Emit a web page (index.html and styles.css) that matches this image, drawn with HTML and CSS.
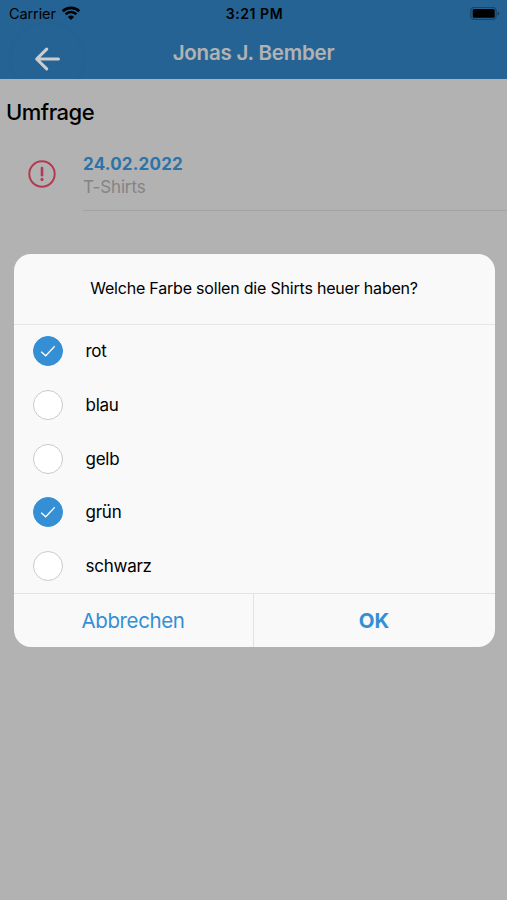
FILE: index.html
```html
<!DOCTYPE html>
<html lang="de">
<head>
  <meta charset="UTF-8">
  <meta name="viewport" content="width=device-width, initial-scale=1.0">
  <title>Umfrage</title>
  <link rel="stylesheet" href="styles.css">
</head>
<body>
  <header class="header">
    <div class="status-bar">
      <div class="carrier">
        <span>Carrier</span>
        <svg width="20" height="15" viewBox="0 0 20 15">
          <path d="M1.7 5.2a11.9 11.9 0 0 1 16.6 0M4.6 8.2a7.7 7.7 0 0 1 10.8 0" fill="none" stroke="#000" stroke-width="2.6"/>
          <path d="M10 14l-3.1-3.1a4.5 4.5 0 0 1 6.2 0z"/>
        </svg>
      </div>
      <div class="clock">3:21 PM</div>
      <svg class="battery" width="30" height="14" viewBox="0 0 30 14">
        <rect x=".8" y=".3" width="25.4" height="12" rx="3.6" fill="none" stroke="#000" stroke-opacity=".3" stroke-width="1.3"/>
        <rect x="2.7" y="1.9" width="22" height="8.8" rx="1.5"/>
        <path d="M27.7 4.5v4q1.5-.6 1.5-2t-1.5-2z" fill-opacity=".4"/>
      </svg>
    </div>
    <div class="toolbar">
      <button class="back-btn" aria-label="Zurück">
        <svg width="28" height="26" viewBox="0 0 28 26">
          <path d="M13.7 3.1L3.7 13l10 9.9M4.2 13h21.2" fill="none" stroke="#cdcdcd" stroke-width="3.1" stroke-linecap="round" stroke-linejoin="round"/>
        </svg>
      </button>
      <h1 class="title">Jonas J. Bember</h1>
    </div>
  </header>

  <main class="content">
    <h2 class="section-title">Umfrage</h2>
    <div class="item">
      <svg class="alert-icon" width="28" height="28" viewBox="0 0 28 28">
        <circle cx="14" cy="14" r="12.7" fill="none" stroke="#ff5474" stroke-width="2"/>
        <path d="M14 8v7.2" stroke="#ff5474" stroke-width="2.6" stroke-linecap="round"/>
        <circle cx="14" cy="19.4" r="1.6" fill="#ff5474"/>
      </svg>
      <div class="item-inner">
        <div class="item-date">24.02.2022</div>
        <div class="item-text">T-Shirts</div>
      </div>
    </div>
  </main>

  <!-- Dialog -->
  <div class="backdrop">
    <div class="alert">
      <div class="alert-head">Welche Farbe sollen die Shirts heuer haben?</div>
      <div class="options">
        <div class="option">
          <span class="check checked"><svg width="18" height="16" viewBox="0 0 18 16"><path d="M2.2 8.7l4.5 4.1 9-9.5"/></svg></span>
          <span class="label">rot</span>
        </div>
        <div class="option">
          <span class="check"></span>
          <span class="label">blau</span>
        </div>
        <div class="option">
          <span class="check"></span>
          <span class="label">gelb</span>
        </div>
        <div class="option">
          <span class="check checked"><svg width="18" height="16" viewBox="0 0 18 16"><path d="M2.2 8.7l4.5 4.1 9-9.5"/></svg></span>
          <span class="label">grün</span>
        </div>
        <div class="option">
          <span class="check"></span>
          <span class="label">schwarz</span>
        </div>
      </div>
      <div class="buttons">
        <button class="btn">Abbrechen</button>
        <button class="btn btn-ok">OK</button>
      </div>
    </div>
  </div>
</body>
</html>
```
FILE: styles.css
```css
* { margin: 0; padding: 0; box-sizing: border-box; }
html, body { width: 100%; height: 100%; overflow: hidden; }
body { font-family: Inter, "Liberation Sans", sans-serif; background: #fff; color: #000; }
button { border: none; background: none; font-family: inherit; cursor: pointer; }
svg { display: block; flex: none; }

/* Header */
.header { height: 79px; background: #348fd5; overflow: hidden; }
.status-bar {
  display: grid; grid-template-columns: 1fr auto 1fr; align-items: center;
  height: 27px; padding: 0 7px 0 9px;
}
.carrier { display: flex; align-items: center; gap: 5px; font-size: 14.5px; letter-spacing: -0.1px; }
.clock { font-size: 14px; font-weight: 600; letter-spacing: 0.55px; }
.battery { justify-self: end; }
.toolbar { display: grid; grid-template-columns: 84px 1fr 84px; height: 52px; }
.back-btn {
  position: relative; z-index: 2;
  display: flex; align-items: center; justify-content: center;
  width: 72px; height: 72px; margin: -4px 0 0 11px;
  border-radius: 50%; box-shadow: 0 0 5px rgba(0,0,0,0.04);
}
.title { text-align: center; color: #fff; font-size: 20.5px; font-weight: 600; line-height: 51px; letter-spacing: -0.2px; white-space: nowrap; }

/* Liste */
.section-title { padding: 19px 6px 0; font-size: 22px; font-weight: 500; line-height: 28px; letter-spacing: -0.5px; }
.item { display: flex; margin-top: 20px; padding-left: 28px; }
.alert-icon { margin-top: 14px; }
.item-inner { flex: 1; height: 65px; margin-left: 27px; padding-top: 7px; border-bottom: 1px solid #e8e8e8; }
.item-date { color: #3fa5f0; font-size: 17px; font-weight: 700; line-height: 23px; letter-spacing: 0.2px; }
.item-text { color: #bdbdbd; font-size: 17px; line-height: 23px; letter-spacing: -0.15px; }

/* Dialog */
.backdrop {
  position: absolute; z-index: 1; top: 0; left: 0; width: 100%; height: 100%;
  display: flex; align-items: center; justify-content: center;
  padding: 1px 0 0 1px;
  background: rgba(0,0,0,0.3);
}
.alert { width: 481px; border-radius: 17px; background: #f9f9f9; overflow: hidden; }
.alert-head {
  height: 70.5px; border-bottom: 1px solid #e6e6e6;
  text-align: center; font-size: 16px; line-height: 68px; letter-spacing: -0.2px; white-space: nowrap;
}
.option { display: flex; align-items: center; gap: 23px; height: 53.7px; padding-left: 19px; font-size: 17px; letter-spacing: -0.25px; }
.check {
  display: flex; align-items: center; justify-content: center;
  width: 30px; height: 30px; border: 1.5px solid #cacaca; border-radius: 50%; background: #fff;
}
.check.checked { border-color: #348fd5; background: #348fd5; }
.check path { fill: none; stroke: #fff; stroke-width: 1.3; }
.buttons { display: flex; height: 54px; border-top: 1px solid #e2e2e2; }
.btn { width: 239px; color: #348fd5; font-size: 20.5px; letter-spacing: -0.4px; }
.btn-ok { flex: 1; border-left: 1px solid #e2e2e2; font-weight: 700; letter-spacing: 0; }
```
